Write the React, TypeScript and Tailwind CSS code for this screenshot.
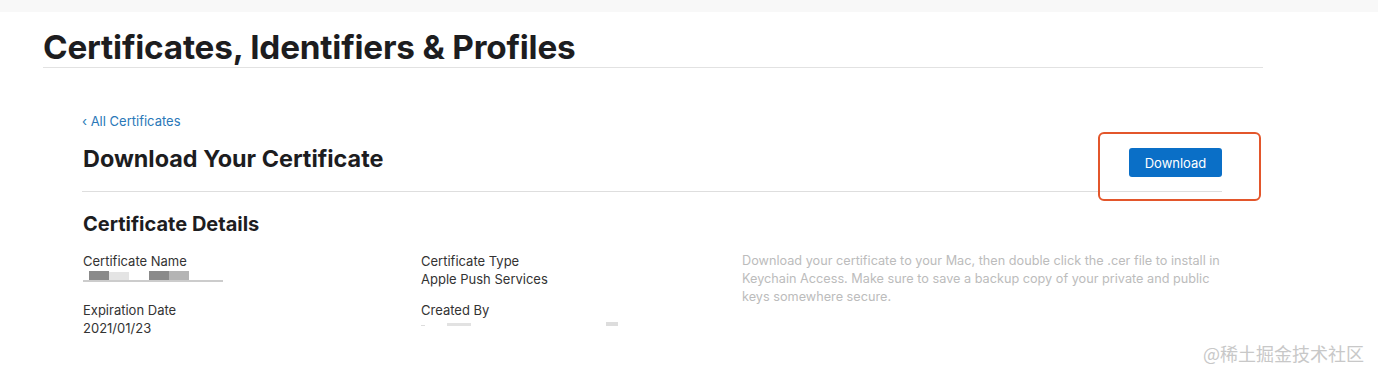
import React from "react";

export default function App() {
  const font = { fontFamily: "Inter, 'Noto Sans', 'Liberation Sans', sans-serif" };
  return (
    <div className="relative w-[1378px] h-[378px] bg-white overflow-hidden text-[#1d1d1f]" style={font}>
      <div className="h-[12px] bg-[#f8f8f8]" />
      <div className="ml-[43px] w-[1220px] mt-[15px] border-b border-[#e2e2e2]">
        <h1 className="text-[33.3px] leading-[40px] font-bold tracking-[-0.2px]">Certificates, Identifiers &amp; Profiles</h1>
      </div>
      <div className="ml-[82px] w-[1140px]">
        <div className="mt-[44px] text-[13px] leading-[18px] text-[#2a78b8]">‹ All Certificates</div>
        <div className="mt-[15px] flex items-start justify-between border-b border-[#dedede] pb-[14px]">
          <h2 className="text-[23.4px] leading-[28px] font-bold ml-[1px]">Download Your Certificate</h2>
          <button className="mt-[3px] h-[29px] w-[93px] rounded-[3px] bg-[#0a6fc7] text-white text-[13px] leading-[29px] pt-[1px]">Download</button>
        </div>
        <h3 className="mt-[19px] ml-[1px] text-[20px] leading-[26px] font-bold">Certificate Details</h3>
        <div className="mt-[15px] ml-[1px] grid grid-cols-[338px_321px_1fr] text-[13px] leading-[18px] text-[#333]">
          <div className="flex flex-col">
            <div>Certificate Name</div>
            <div className="relative h-[18px]">
              <div className="absolute left-[6px] top-[1px] h-[9px] w-[20px] bg-[#8a8a8a]" />
              <div className="absolute left-[26px] top-[2px] h-[8px] w-[20px] bg-[#e4e4e4]" />
              <div className="absolute left-[66px] top-[1px] h-[9px] w-[20px] bg-[#8a8a8a]" />
              <div className="absolute left-[86px] top-[1px] h-[9px] w-[20px] bg-[#b4b4b4]" />
              <div className="absolute left-[0px] top-[10px] h-[2px] w-[140px] bg-[#cccccc]" />
            </div>
            <div className="mt-[13px]">Expiration Date</div>
            <div>2021/01/23</div>
          </div>
          <div className="flex flex-col">
            <div>Certificate Type</div>
            <div>Apple Push Services</div>
            <div className="mt-[13px]">Created By</div>
            <div className="relative h-[18px]">
              <div className="absolute left-[0px] top-[6px] h-[1px] w-[4px] bg-[#dddddd]" />
              <div className="absolute left-[26px] top-[4px] h-[3px] w-[24px] bg-[#e2e2e2]" />
              <div className="absolute left-[185px] top-[3px] h-[4px] w-[12px] bg-[#dddddd]" />
            </div>
          </div>
          <div className="w-[490px] text-[12.7px] text-[#bcbcbc]">
            Download your certificate to your Mac, then double click the .cer file to install in Keychain Access. Make sure to save a backup copy of your private and public keys somewhere secure.
          </div>
        </div>
      </div>
      <div className="absolute left-[1098px] top-[132px] w-[163px] h-[69px] rounded-[6px] border-2 border-[#e3562b]" />
      <div
        className="absolute left-[1203px] top-[342px] text-[18px] leading-[22px] text-[#c8c8c8]"
        style={{ fontFamily: "'Noto Sans CJK SC', 'Noto Sans', sans-serif" }}
      >
        @稀土掘金技术社区
      </div>
    </div>
  );
}
